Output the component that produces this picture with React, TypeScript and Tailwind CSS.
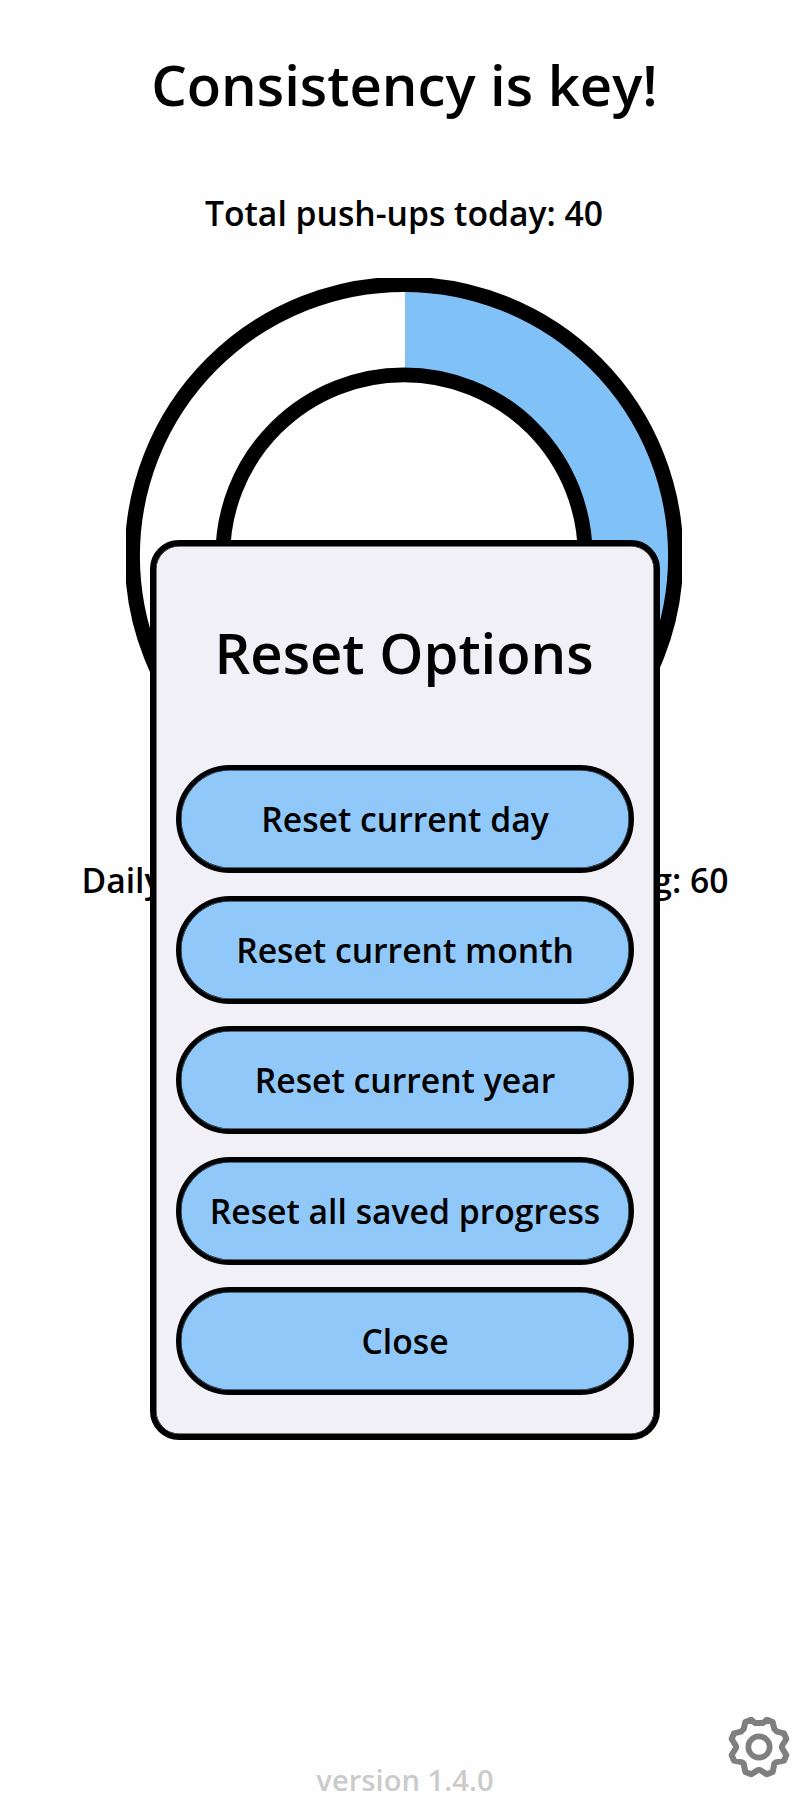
const actions = [
  'Reset current day',
  'Reset current month',
  'Reset current year',
  'Reset all saved progress',
  'Close',
];

function ProgressRing() {
  return (
    <svg className="mt-[42px] h-[556px] w-[556px] shrink-0 -translate-x-[1px]" viewBox="-278 -278 556 556" fill="none">
      <path d="M1 -271 A271 271 0 0 1 159.3 219.2 L106.4 146.4 A181 181 0 0 0 1 -181 Z" fill="#80c1f8" />
      <circle r="271.7" stroke="#000" strokeWidth="15.2" />
      <circle r="181.2" stroke="#000" strokeWidth="14.8" />
    </svg>
  );
}

function GearIcon() {
  return (
    <svg className="h-[62px] w-[62px]" viewBox="-93 -93 186 186" fill="none" stroke="#7f7f7f" strokeWidth="18" strokeLinejoin="round">
      <path d="M-12 -72 L12 -72 L24 -82 L41 -75 L46 -54 L54 -46 L75 -41 L82 -24 L69 -3 L69 3 L82 24 L75 41 L50 46 L46 50 L41 75 L24 82 L3 69 L-3 69 L-24 82 L-41 75 L-46 50 L-50 46 L-75 41 L-82 24 L-69 3 L-69 -3 L-82 -24 L-75 -41 L-54 -46 L-46 -54 L-41 -75 L-24 -82 Z" />
      <circle r="32" strokeWidth="17" />
    </svg>
  );
}

export default function App() {
  return (
    <main className="relative flex h-[1800px] w-[810px] flex-col items-center overflow-hidden bg-[#fefefe] font-['Open_Sans',sans-serif] font-semibold text-black">
      <h1 className="mt-[44px] mr-px text-[56.2px] leading-[80px]">Consistency is key!</h1>
      <p className="mt-[66px] mr-[2px] text-[33.7px] leading-[46px]">Total push-ups today: 40</p>
      <ProgressRing />
      <div className="mt-[23px] flex w-[647px] justify-between text-[33.7px] leading-[46px]">
        <span>Daily goal: 100</span>
        <span>Remaining: 60</span>
      </div>
      <footer className="mt-auto -mb-px flex h-[42px] items-center text-[29.2px] leading-[42px] text-[#cbcbcb]">version 1.4.0</footer>
      <button aria-label="Settings" className="absolute right-[20px] bottom-[22px]">
        <GearIcon />
      </button>
      <section
        role="dialog"
        className="absolute top-[540px] left-[150px] flex h-[900px] w-[510px] flex-col items-center rounded-[29px] border-[6px] border-black bg-[#f1f0f7] shadow-[inset_0_0_0_0.5px_#000]"
      >
        <h2 className="mt-[66px] mr-[2px] mb-[73px] text-[56.2px] leading-[80px]">Reset Options</h2>
        <div className="flex flex-col gap-[22.5px]">
          {actions.map((label) => (
            <button key={label} className="flex h-[108px] w-[458px] items-center justify-center rounded-full border-[5px] border-black bg-[#90c9f9] text-[33.7px] leading-[46px] shadow-[inset_0_0_0_0.5px_#000]">
              {label}
            </button>
          ))}
        </div>
      </section>
    </main>
  );
}
